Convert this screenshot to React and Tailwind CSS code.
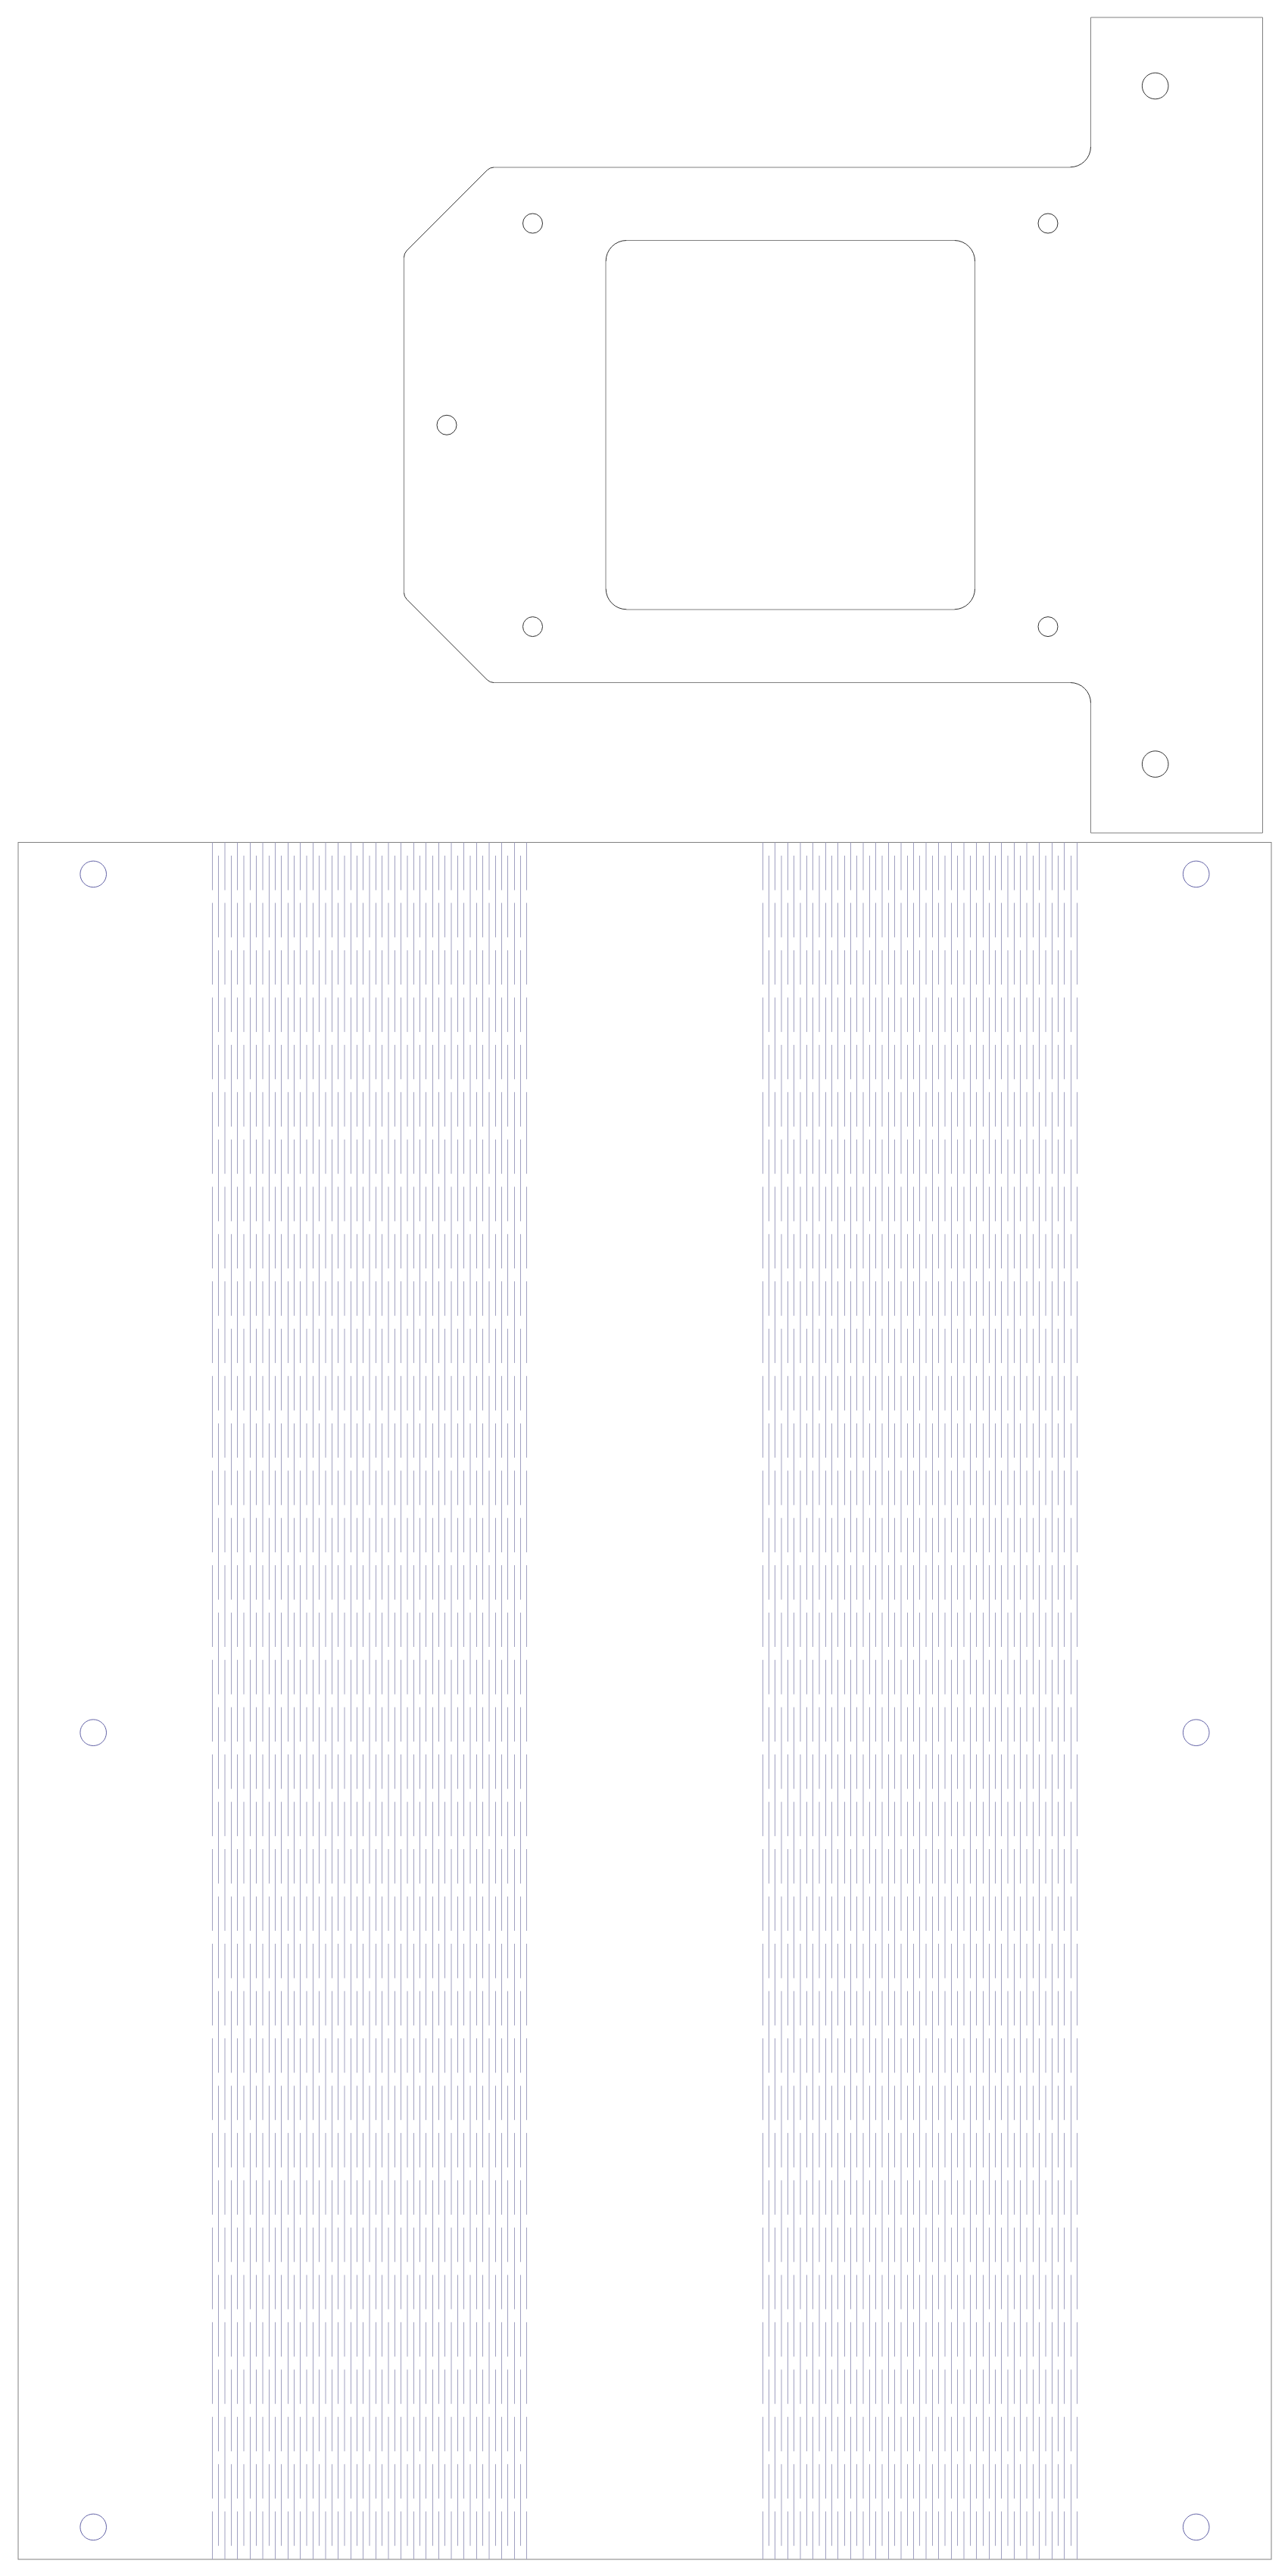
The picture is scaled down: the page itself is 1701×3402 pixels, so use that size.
const LEFT_SLITS = [
  280.5, 288.5, 297, 305.5, 313.5, 322, 330.5, 338.5, 347, 355.5, 363.5, 371.5, 380.5, 388.5, 396.5, 405, 413.5,
  421.5, 430, 438.5, 446.5, 455, 463.5, 471.5, 479.5, 488, 496.5, 504.5, 513, 521.5, 529.5, 538, 546.5, 554.5,
  562.5, 571.5, 579.5, 587.5, 596, 604.5, 612.5, 621, 629.5, 637.5, 646, 654.5, 662.5, 670.5, 679.5, 687.5, 695.5,
];

const RIGHT_SLITS = [
  1007.5, 1015.5, 1023.5, 1032, 1040.5, 1048.5, 1057, 1065.5, 1073.5, 1082, 1090.5, 1098.5, 1106.5, 1115.5, 1123.5,
  1131.5, 1140, 1148.5, 1156.5, 1165, 1173.5, 1181.5, 1190, 1198.5, 1206.5, 1214.5, 1223, 1231.5, 1239.5, 1248,
  1256.5, 1264.5, 1273, 1281.5, 1289.5, 1298.5, 1306.5, 1314.5, 1322.5, 1331, 1339.5, 1347.5, 1356, 1364.5, 1372.5,
  1381, 1389.5, 1397.5, 1405.5, 1414.5, 1422.5,
];

const PERIOD = 124.96;
const SLIT = 107.9;

// Even columns run edge to edge; odd columns are shifted by half a period.
const EVEN_SEGMENTS = [
  [1112.5, 1175.6],
  ...Array.from({ length: 17 }, (_, i) => [1192.4 + i * PERIOD, 1192.4 + i * PERIOD + SLIT]),
  [3316.7, 3380],
];
const ODD_SEGMENTS = Array.from({ length: 18 }, (_, i) => [1130 + i * PERIOD, 1130 + i * PERIOD + SLIT]);

const slitPath = (x, i) =>
  (i % 2 ? ODD_SEGMENTS : EVEN_SEGMENTS).map(([a, b]) => `M${x} ${a.toFixed(1)}V${b.toFixed(1)}`).join("");

const BRACKET_HOLES = [
  [1525.7, 113.5, 17.3],
  [1525.7, 1009.1, 17.3],
  [703.5, 295, 13],
  [1384, 295, 13],
  [590, 561.3, 13],
  [703.5, 827.6, 13],
  [1384, 827.6, 13],
];

const PLATE_HOLES = [
  [123.2, 1154.4],
  [1579.7, 1154.4],
  [123.2, 2288.2],
  [1579.7, 2288.2],
  [123.2, 3337.4],
  [1579.7, 3337.4],
];

function Bracket() {
  return (
    <g>
      <path
        className="stroke-[#808080]"
        d="M1440.5 194V23H1667.5V1100H1440.5V928.5M1413.5 901.5H652M533.5 782.5V340M652 221H1413.5M800 345V777.5M827.5 805H1260.5M1287.5 777.5V345M1260.5 317.5H827.5"
      />
      <g className="stroke-[#303030]">
        <path d="M1413.5 220.7A27 27 0 0 0 1440.5 194M1440.5 928.5A27 27 0 0 0 1413.5 901.5M652 901.5A13 13 0 0 1 643.5 898L537.2 791.5A13 13 0 0 1 533.5 782.5M533.5 340A13 13 0 0 1 537.2 331L643.5 224.6A13 13 0 0 1 652 221" />
        <path d="M800.2 345A27.3 27.3 0 0 1 827.5 317.5M1260.5 317.5A27.3 27.3 0 0 1 1287.5 345M1287.5 777.5A27.3 27.3 0 0 1 1260.5 804.8M827.5 804.8A27.3 27.3 0 0 1 800.2 777.5" />
        {BRACKET_HOLES.map(([cx, cy, r]) => (
          <circle key={`${cx}-${cy}`} cx={cx} cy={cy} r={r} />
        ))}
      </g>
    </g>
  );
}

function Plate() {
  return (
    <g>
      <rect x="24" y="1112.5" width="1655" height="2267.5" className="stroke-[#808080]" />
      <g className="stroke-[#a0a0c0]">
        {LEFT_SLITS.map((x, i) => (
          <path key={x} d={slitPath(x, i)} />
        ))}
        {RIGHT_SLITS.map((x, i) => (
          <path key={x} d={slitPath(x, i)} />
        ))}
      </g>
      <g className="stroke-[#6262a6]">
        {PLATE_HOLES.map(([cx, cy]) => (
          <circle key={`${cx}-${cy}`} cx={cx} cy={cy} r="17.3" />
        ))}
      </g>
    </g>
  );
}

export default function App() {
  return (
    <main className="w-full bg-white">
      <svg viewBox="0 0 1701 3402" className="block h-auto w-full fill-none stroke-1" role="img" aria-label="Cutting template">
        <Bracket />
        <Plate />
      </svg>
    </main>
  );
}
